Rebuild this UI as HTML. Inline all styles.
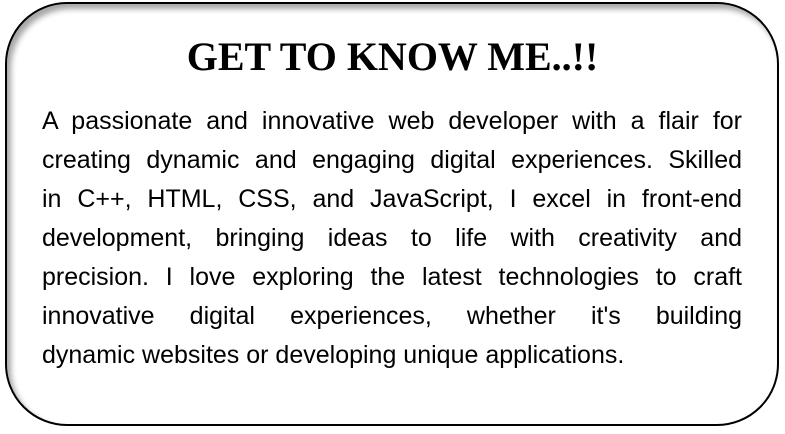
<!DOCTYPE html>
<html><head><style>
html,body{margin:0;padding:0;background:#fff;width:785px;height:434px;overflow:hidden}
.box{position:absolute;left:5px;top:2px;width:770px;height:420px;border:2px solid #000;border-radius:62px;box-shadow:inset 4px 5px 6px rgba(0,0,0,0.35);background:#fff}
h1{position:absolute;left:0;width:785px;top:34px;margin:0;text-align:center;font-family:"Liberation Serif",serif;font-weight:bold;font-size:40px;line-height:46px;color:#000}
.t{position:absolute;left:42px;width:700px;top:102px;font-family:"Liberation Sans",sans-serif;font-size:25px;color:#000}
.t div{height:39px;line-height:39px;text-align:justify;text-align-last:justify;white-space:nowrap;overflow:visible}
.t div.l{text-align-last:left}
</style></head><body>
<div class="box"></div>
<h1>GET TO KNOW ME..!!</h1>
<div class="t">
<div>A passionate and innovative web developer with a flair for</div>
<div>creating dynamic and engaging digital experiences. Skilled</div>
<div>in C++, HTML, CSS, and JavaScript, I excel in front-end</div>
<div>development, bringing ideas to life with creativity and</div>
<div>precision. I love exploring the latest technologies to craft</div>
<div>innovative digital experiences, whether it's building</div>
<div class="l">dynamic websites or developing unique applications.</div>
</div>
</body></html>
